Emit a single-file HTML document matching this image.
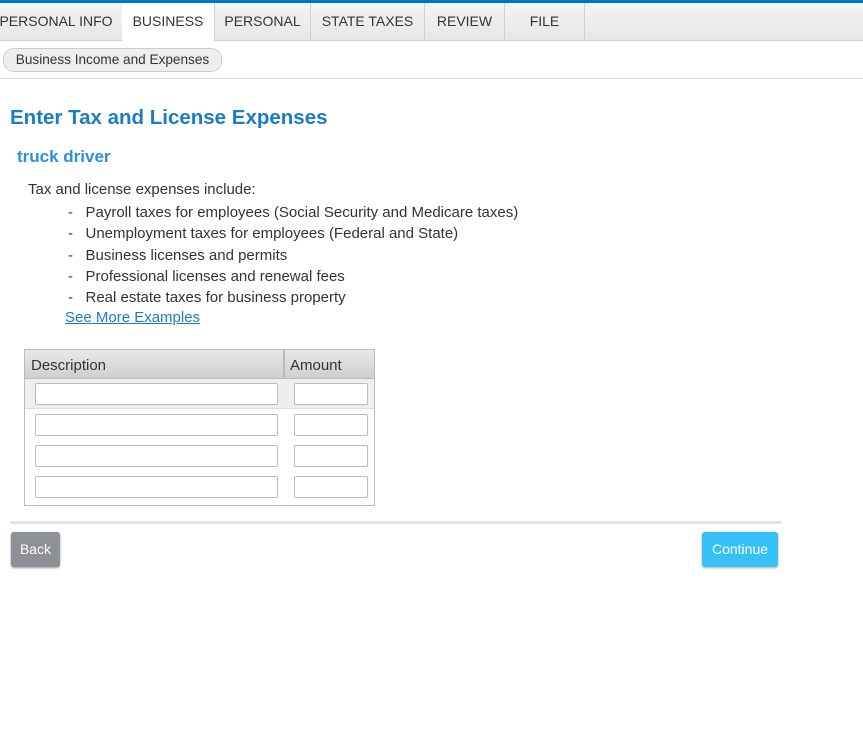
<!DOCTYPE html>
<html><head><style>
body{margin:0;width:863px;height:732px;background:#fff;font-family:"Liberation Sans",Arial,sans-serif;position:relative;overflow:hidden}
.top{position:absolute;top:0;left:0;width:863px;height:3px;background:#0077c5}
.tabs{position:absolute;top:3px;left:0;width:863px;height:37px;background:linear-gradient(#f4f4f4,#e6e6e6);border-bottom:1px solid #ccc}
.tab{position:absolute;top:0;height:37px;line-height:36px;font-size:14px;color:#333;text-align:center;border-right:1px solid #d0d0d0}
.tab.act{background:#fff;height:38px}
.crumb{position:absolute;top:48px;left:3px;width:217px;height:22px;border:1px solid #ccc;border-radius:11px;background:#eee;font-size:13.6px;line-height:22px;text-align:center;color:#333}
.hr1{position:absolute;top:78px;left:0;width:863px;height:1px;background:#ddd}
.abs{position:absolute;white-space:nowrap}
input{position:absolute;border:1px solid #bbb;border-radius:2px;height:20px;box-sizing:border-box;padding:0;margin:0}
</style></head><body>
<div class="top"></div>
<div class="tabs">
<div class="tab" style="left:-10px;width:132px">PERSONAL INFO</div>
<div class="tab act" style="left:122px;width:92px">BUSINESS</div>
<div class="tab" style="left:215px;width:95px">PERSONAL</div>
<div class="tab" style="left:311px;width:113px">STATE TAXES</div>
<div class="tab" style="left:425px;width:79px">REVIEW</div>
<div class="tab" style="left:505px;width:79px">FILE</div>
</div>
<div class="crumb">Business Income and Expenses</div>
<div class="hr1"></div>
<div class="abs" style="left:10px;top:106px;font-size:20.5px;font-weight:bold;color:#1a7dc4">Enter Tax and License Expenses</div>
<div class="abs" style="left:17px;top:147px;font-size:17px;font-weight:bold;color:#2b8ee0">truck driver</div>
<div class="abs" style="left:28px;top:181px;font-size:15px;color:#333">Tax and license expenses include:</div>
<div class="abs" style="left:68px;top:202px;font-size:15px;color:#333;line-height:21.3px">-&nbsp;&nbsp; Payroll taxes for employees (Social Security and Medicare taxes)<br>-&nbsp;&nbsp; Unemployment taxes for employees (Federal and State)<br>-&nbsp;&nbsp; Business licenses and permits<br>-&nbsp;&nbsp; Professional licenses and renewal fees<br>-&nbsp;&nbsp; Real estate taxes for business property</div>
<div class="abs" style="left:65px;top:309px;font-size:15px;color:#1a7dc4;text-decoration:underline">See More Examples</div>
<div class="abs" style="left:24px;top:349px;width:349px;height:155px;border:1px solid #bbb"></div>
<div class="abs" style="left:25px;top:350px;width:349px;height:28px;background:linear-gradient(#e8e8e8,#cfcfcf);border-bottom:1px solid #bbb"></div>
<div class="abs" style="left:283px;top:350px;width:2px;height:28px;background:#bbb"></div>
<div class="abs" style="left:31px;top:357px;font-size:15px;color:#333">Description</div>
<div class="abs" style="left:290px;top:357px;font-size:15px;color:#333">Amount</div>
<div class="abs" style="left:25px;top:379px;width:349px;height:29px;background:#eee;border-bottom:1px solid #ddd"></div>
<input style="left:35px;top:383px;width:243px;height:22px"><input style="left:294px;top:383px;width:74px;height:22px">
<input style="left:35px;top:414px;width:243px;height:22px"><input style="left:294px;top:414px;width:74px;height:22px">
<input style="left:35px;top:445px;width:243px;height:22px"><input style="left:294px;top:445px;width:74px;height:22px">
<input style="left:35px;top:476px;width:243px;height:22px"><input style="left:294px;top:476px;width:74px;height:22px">
<div class="abs" style="left:10px;top:521px;width:771px;height:3px;background:#e2e2e2"></div>
<div class="abs" style="left:11px;top:532px;width:49px;height:35px;background:#8d9096;border-radius:3px;color:#fff;font-size:14px;line-height:35px;text-align:center;box-shadow:0 1px 2px #999">Back</div>
<div class="abs" style="left:702px;top:532px;width:76px;height:35px;background:#35c0f7;border-radius:3px;color:#fff;font-size:14px;line-height:35px;text-align:center;box-shadow:0 1px 2px #aaa">Continue</div>
</body></html>
